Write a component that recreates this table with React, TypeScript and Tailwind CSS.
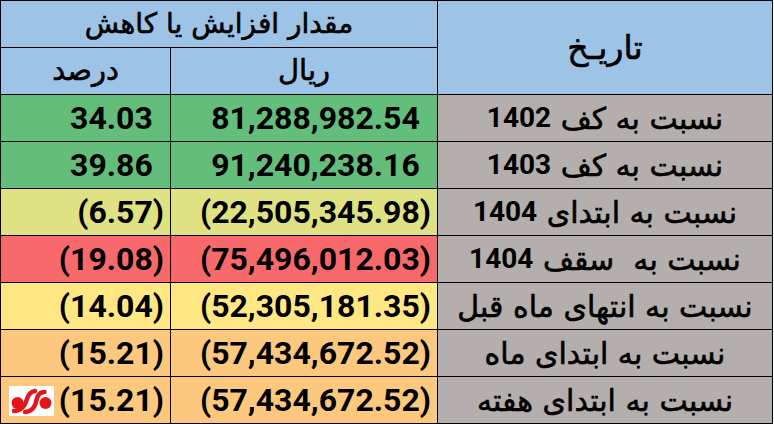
import React from 'react';

type Row = {
  label: string;
  year?: string;
  rial: string;
  pct: string;
  bg: string;
};

const rows: Row[] = [
  { label: 'نسبت به کف ', year: '1402', rial: '81,288,982.54', pct: '34.03', bg: 'bg-[#63be7b]' },
  { label: 'نسبت به کف ', year: '1403', rial: '91,240,238.16', pct: '39.86', bg: 'bg-[#63be7b]' },
  { label: 'نسبت به ابتدای ', year: '1404', rial: '(22,505,345.98)', pct: '(6.57)', bg: 'bg-[#dfe283]' },
  { label: 'نسبت به  سقف ', year: '1404', rial: '(75,496,012.03)', pct: '(19.08)', bg: 'bg-[#f8696b]' },
  { label: 'نسبت به انتهای ماه قبل', rial: '(52,305,181.35)', pct: '(14.04)', bg: 'bg-[#ffe884]' },
  { label: 'نسبت به ابتدای ماه', rial: '(57,434,672.52)', pct: '(15.21)', bg: 'bg-[#fcc87d]' },
  { label: 'نسبت به ابتدای هفته', rial: '(57,434,672.52)', pct: '(15.21)', bg: 'bg-[#fcc87d]' },
];

const MehrLogo: React.FC = () => (
  <svg width="45" height="30" viewBox="0 0 45 30">
    <rect width="45" height="30" fill="#fff" />
    <g fill="#e3161b" stroke="#e3161b" strokeLinecap="round">
      <circle cx="8.5" cy="17" r="6" stroke="none" />
      <path d="M5 25 C12 25 16 20 18 13 C19.5 8.5 22 5.5 26 5" fill="none" strokeWidth="4.5" />
      <path d="M16 26 C23 25.5 26.5 20 27.5 14 C28.5 9 31 6 35.5 6" fill="none" strokeWidth="4.5" />
      <circle cx="36.5" cy="17" r="6" stroke="none" />
    </g>
  </svg>
);

// Excel accounting style: positives keep room for the closing paren
const Num: React.FC<{ value: string }> = ({ value }) => (
  <span className="font-['Roboto'] font-bold text-[32px] leading-none">
    {value}
    {!value.startsWith('(') && <span className="invisible">)</span>}
  </span>
);

const fa = "font-['DejaVu_Sans',sans-serif] [-webkit-text-stroke:0.6px_#000]";

export default function App() {
  return (
    <div className="w-[774px] h-[424px] bg-white">
      <div className="grid grid-cols-[169px_266px_334px] grid-rows-[repeat(9,46px)] gap-px p-px bg-black w-[773px] text-black">
        {/* Header */}
        <div className={`col-span-2 bg-[#9dc3e6] flex items-center justify-center ${fa} text-[28px]`} dir="rtl">
          مقدار افزایش یا کاهش
        </div>
        <div className={`row-span-2 bg-[#9dc3e6] flex items-center justify-center ${fa} text-[33px]`} dir="rtl">
          تاریـخ
        </div>
        <div className={`bg-[#9dc3e6] flex items-center justify-center ${fa} text-[29px]`} dir="rtl">
          درصد
        </div>
        <div className={`bg-[#9dc3e6] flex items-center justify-center ${fa} text-[29px]`} dir="rtl">
          ریال
        </div>

        {/* Data rows */}
        {rows.map((r, i) => (
          <React.Fragment key={i}>
            <div className={`${r.bg} relative flex items-center justify-end pr-[6px]`}>
              {i === rows.length - 1 && (
                <div className="absolute left-[8px] top-[9px]">
                  <MehrLogo />
                </div>
              )}
              <Num value={r.pct} />
            </div>
            <div className={`${r.bg} flex items-center justify-end pr-[6px]`}>
              <Num value={r.rial} />
            </div>
            <div
              className={`bg-[#b4aead] flex items-center justify-center whitespace-pre ${fa} text-[30px]`}
              dir="rtl"
            >
              {r.label}
              {r.year && (
                <span className="font-['Roboto'] font-bold text-[28px] [-webkit-text-stroke:0px]">{r.year}</span>
              )}
            </div>
          </React.Fragment>
        ))}
      </div>
    </div>
  );
}
